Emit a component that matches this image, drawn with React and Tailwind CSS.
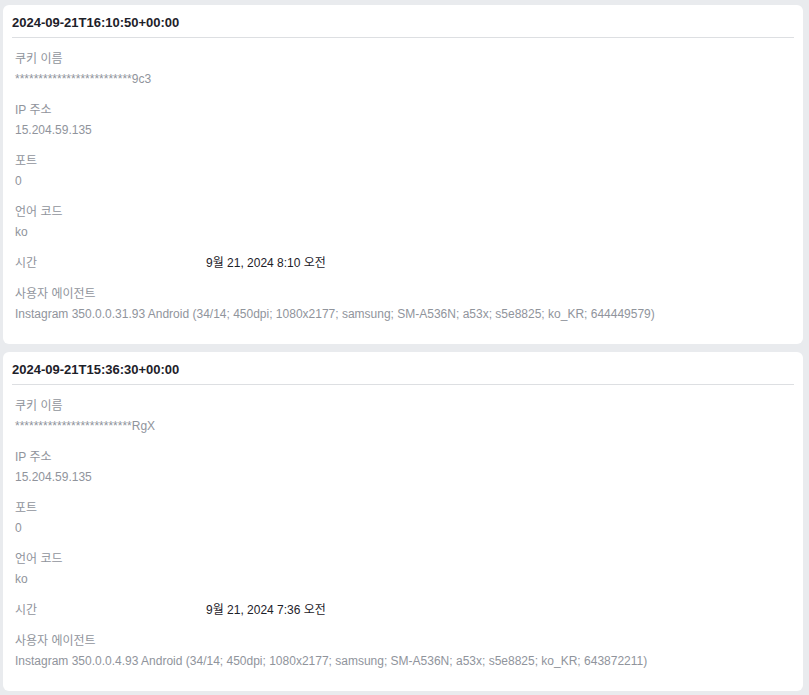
const sessions = [
  {
    id: 1,
    created: '2024-09-21T16:10:50+00:00',
    cookie: '*************************9c3',
    ip: '15.204.59.135',
    port: '0',
    lang: 'ko',
    time: '9월 21, 2024 8:10 오전',
    agent: 'Instagram 350.0.0.31.93 Android (34/14; 450dpi; 1080x2177; samsung; SM-A536N; a53x; s5e8825; ko_KR; 644449579)',
  },
  {
    id: 2,
    created: '2024-09-21T15:36:30+00:00',
    cookie: '*************************RgX',
    ip: '15.204.59.135',
    port: '0',
    lang: 'ko',
    time: '9월 21, 2024 7:36 오전',
    agent: 'Instagram 350.0.0.4.93 Android (34/14; 450dpi; 1080x2177; samsung; SM-A536N; a53x; s5e8825; ko_KR; 643872211)',
  },
];

// 라벨 + 값 한 묶음
const Field = ({ label, value }) => (
  <div className="mb-[11px]">
    <div className="leading-5 text-[#90949c]">{label}</div>
    <div className="leading-5 text-[#90949c]">{value}</div>
  </div>
);

const SessionCard = ({ s }) => (
  <div className="rounded-md bg-white px-[9px] pt-[8px] pb-[9px]">
    <div className="border-b border-[#dddfe2] pb-[4px] text-[13px] font-bold leading-5 text-[#1d2129]">
      {s.created}
    </div>
    <div className="px-[3px] pt-[11px]">
      <Field label="쿠키 이름" value={s.cookie} />
      <Field label="IP 주소" value={s.ip} />
      <Field label="포트" value={s.port} />
      <Field label="언어 코드" value={s.lang} />
      {/* 시간 행은 한 줄로 */}
      <div className="mb-[11px] flex leading-5">
        <div className="w-[191px] shrink-0 text-[#90949c]">시간</div>
        <div className="text-[#1d2129]">{s.time}</div>
      </div>
      <Field label="사용자 에이전트" value={s.agent} />
    </div>
  </div>
);

export default function App() {
  return (
    <main
      className="min-h-screen bg-[#e9ebee] pt-[5px] pb-[4px] pl-[3px] pr-[6px] text-[12px]"
      style={{ fontFamily: '"Liberation Sans", "Noto Sans CJK KR", Arial, sans-serif' }}
    >
      <div className="flex flex-col gap-2">
        {sessions.map((s) => (
          <SessionCard key={s.id} s={s} />
        ))}
      </div>
    </main>
  );
}
